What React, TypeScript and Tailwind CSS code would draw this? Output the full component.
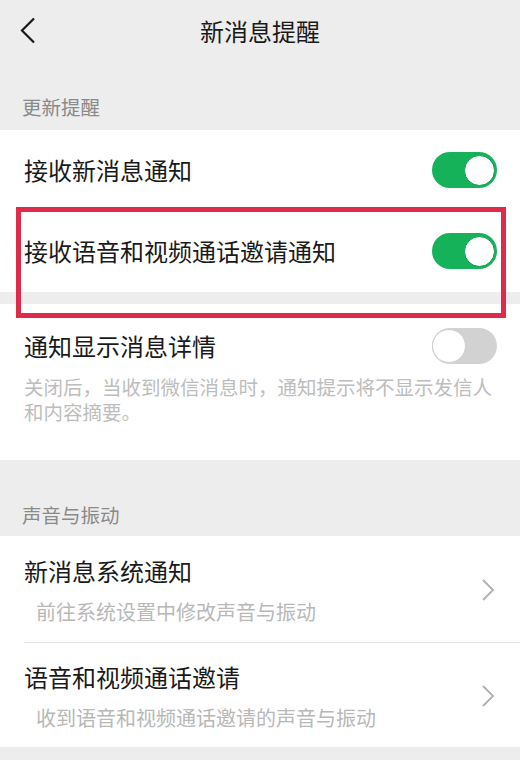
import React from "react";

const font = {
  fontFamily: '"Noto Sans CJK SC", "Noto Sans", sans-serif',
};

function Toggle({ on }: { on: boolean }) {
  if (on) {
    return (
      <div className="relative flex h-[36px] w-[65px] shrink-0 items-center justify-end rounded-full bg-[#16b25a] pr-[2px]">
        <div className="h-[31px] w-[31px] rounded-full border-[1.5px] border-[#139a4e] bg-white" />
      </div>
    );
  }
  return (
    <div className="flex h-[36px] w-[65px] shrink-0 items-center justify-start rounded-full bg-[#d2d2d2]">
      <div className="h-[34px] w-[34px] rounded-full border border-[#cfcfcf] bg-white" />
    </div>
  );
}

function Chevron() {
  return (
    <svg width="14" height="24" viewBox="0 0 14 24" className="shrink-0">
      <path d="M2 2 L12 12 L2 22" fill="none" stroke="#b3b3b3" strokeWidth="2" />
    </svg>
  );
}

export default function App() {
  return (
    <div className="relative h-[760px] w-[520px] overflow-hidden bg-[#ededed]" style={font}>
      {/* Header */}
      <div className="relative flex h-[62px] items-center justify-center">
        <svg width="16" height="28" viewBox="0 0 16 28" className="absolute left-[20px] top-[17px]">
          <path d="M14 1.5 L2 13.5 L14 25.5" fill="none" stroke="#1a1a1a" strokeWidth="2.2" />
        </svg>
        <div className="text-[24px] leading-[32px] text-[#1a1a1a]">新消息提醒</div>
      </div>

      {/* Section label */}
      <div className="flex h-[68px] items-end px-[22px] pb-[11px]">
        <div className="text-[19.5px] leading-[24px] text-[#8a8a8a]">更新提醒</div>
      </div>

      {/* Section 1 */}
      <div className="bg-white">
        <div className="flex h-[80px] items-center justify-between pl-[24px] pr-[23px]">
          <div className="text-[24px] leading-[32px] text-[#1a1a1a]">接收新消息通知</div>
          <Toggle on />
        </div>
        <div className="flex h-[82px] items-center justify-between pl-[24px] pr-[23px]">
          <div className="text-[24px] leading-[32px] text-[#1a1a1a]">接收语音和视频通话邀请通知</div>
          <Toggle on />
        </div>
      </div>

      <div className="h-[12px]" />

      <div className="h-[156px] bg-white pl-[24px] pr-[23px] pt-[24px]">
        <div className="flex h-[36px] items-center justify-between">
          <div className="text-[24px] leading-[32px] text-[#1a1a1a]">通知显示消息详情</div>
          <Toggle on={false} />
        </div>
        <div className="mt-[9.5px] w-[472px] text-[19.5px] leading-[25px] text-[#bdbdbd]">
          关闭后，当收到微信消息时，通知提示将不显示发信人和内容摘要。
        </div>
      </div>

      {/* Section label 2 */}
      <div className="flex h-[76px] items-end px-[22px] pb-[9px]">
        <div className="text-[19.5px] leading-[24px] text-[#8a8a8a]">声音与振动</div>
      </div>

      {/* Section 2 */}
      <div className="bg-white pl-[24px]">
        <div className="flex items-center justify-between border-b border-[#e6e6e6] pb-[17px] pr-[25px] pt-[19px]">
          <div>
            <div className="text-[24px] leading-[32px] text-[#1a1a1a]">新消息系统通知</div>
            <div className="mt-[12px] pl-[12px] text-[20px] leading-[26px] text-[#b8b8b8]">
              前往系统设置中修改声音与振动
            </div>
          </div>
          <Chevron />
        </div>
        <div className="flex items-center justify-between pb-[16px] pr-[25px] pt-[18px]">
          <div>
            <div className="text-[24px] leading-[32px] text-[#1a1a1a]">语音和视频通话邀请</div>
            <div className="mt-[12px] pl-[12px] text-[20px] leading-[26px] text-[#b8b8b8]">
              收到语音和视频通话邀请的声音与振动
            </div>
          </div>
          <Chevron />
        </div>
      </div>

      {/* Red highlight annotation */}
      <div className="pointer-events-none absolute left-[16px] top-[207px] h-[111px] w-[490px] border-[5px] border-[#df2a49]" />
    </div>
  );
}
